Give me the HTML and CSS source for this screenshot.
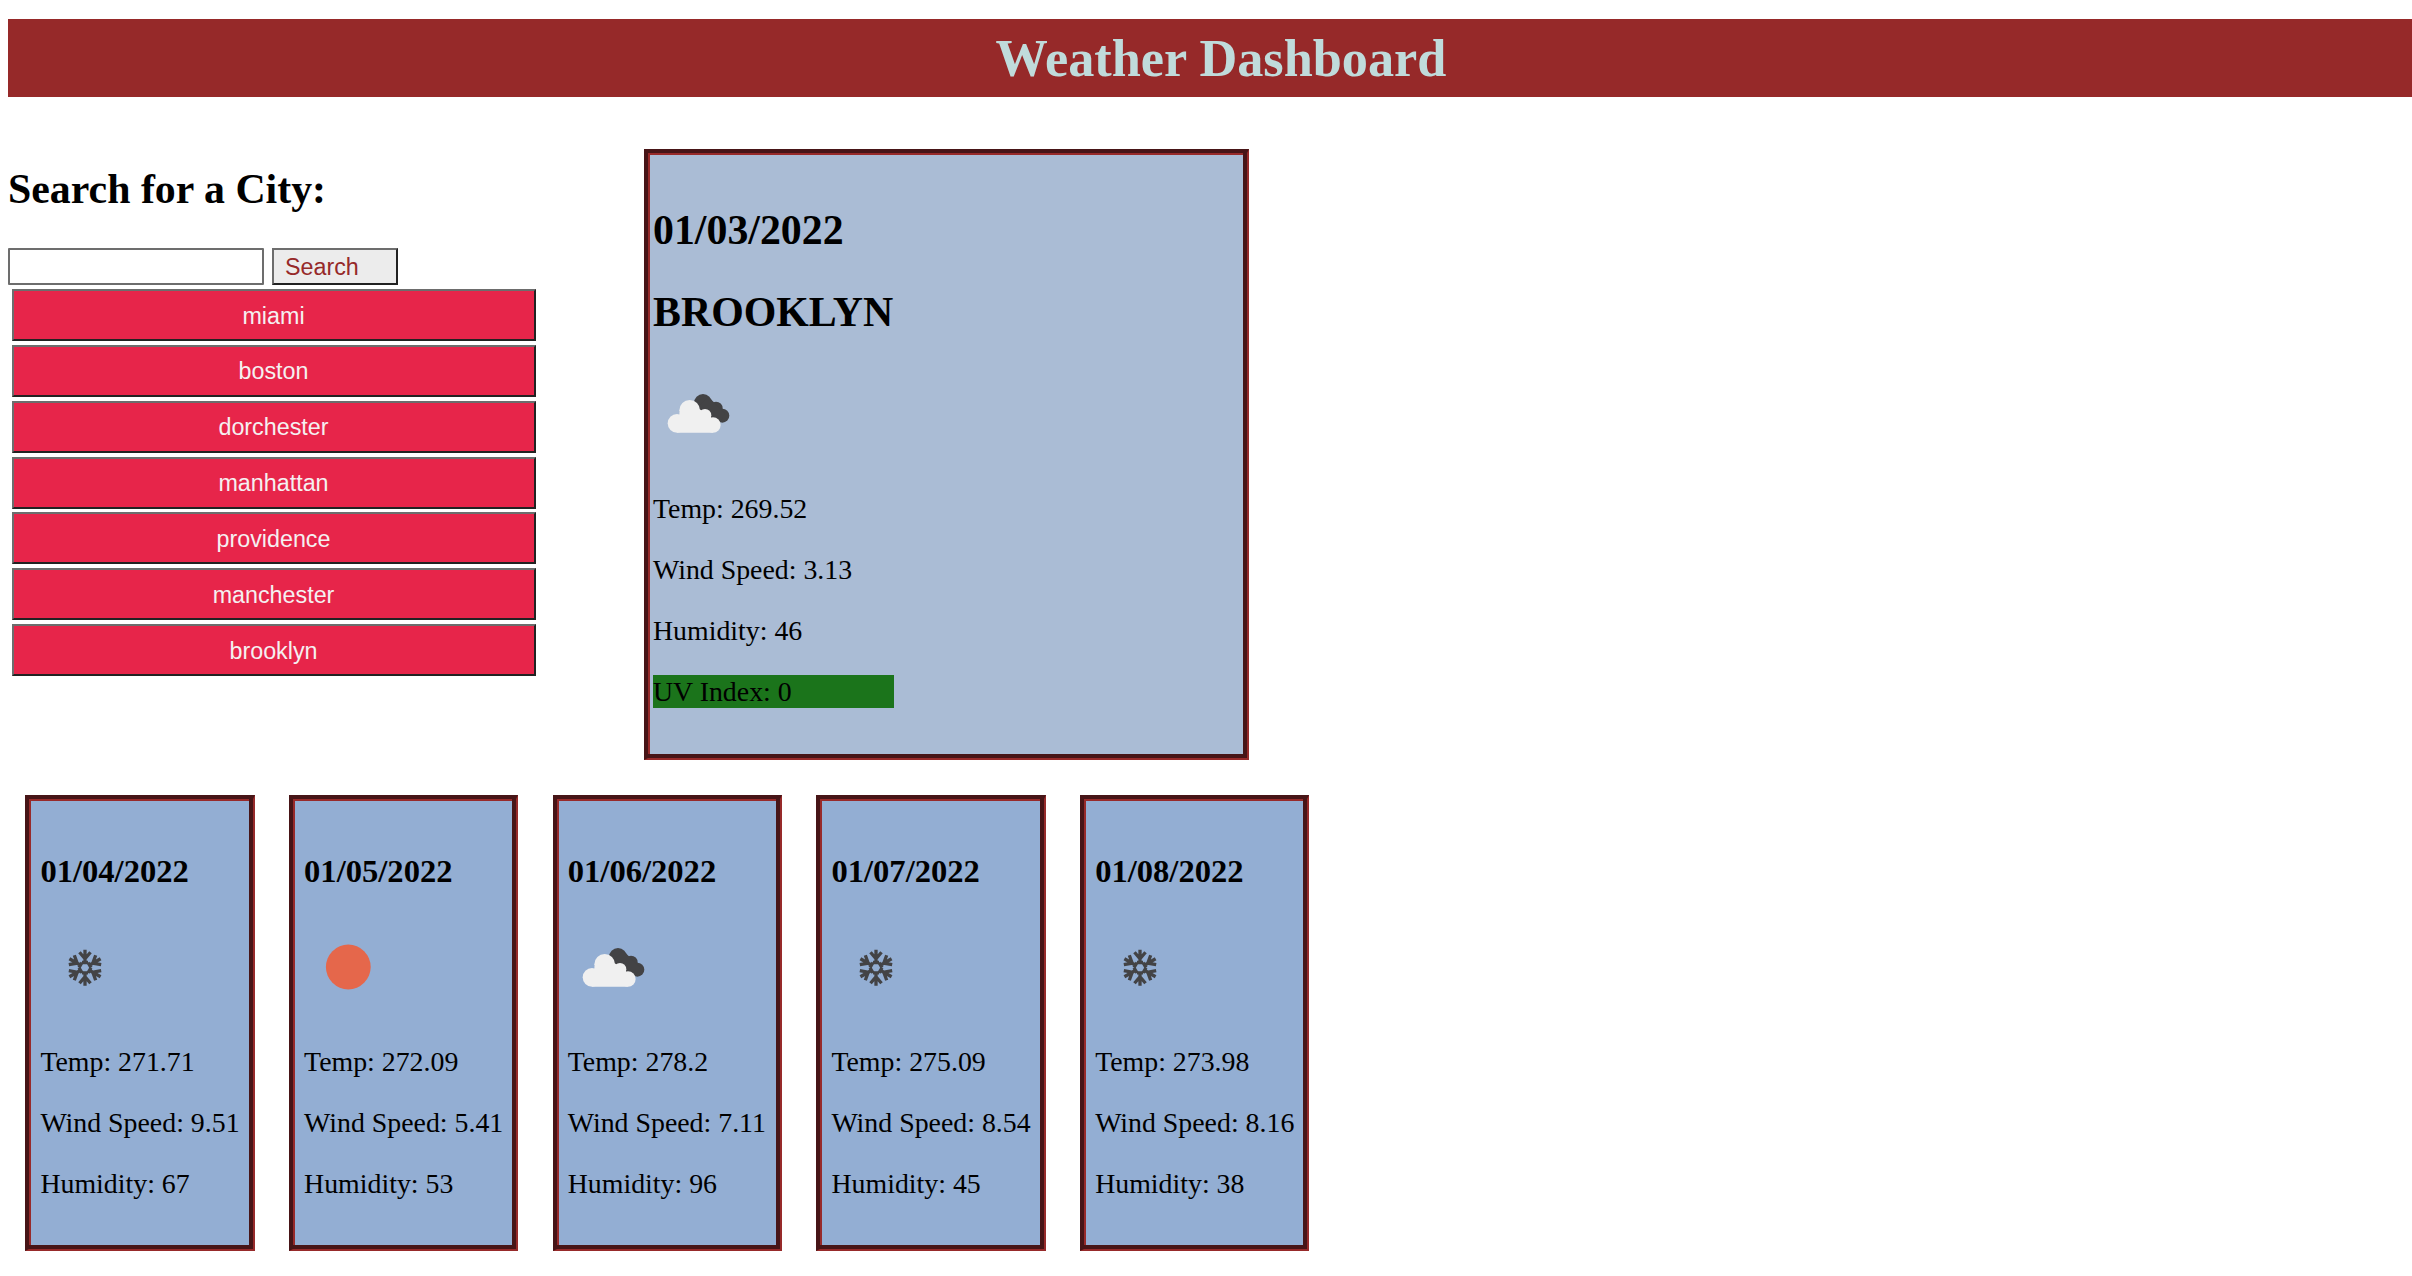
FILE: index.html
```html
<!DOCTYPE html>
<html lang="en">
<head>
<meta charset="utf-8">
<title>Weather Dashboard</title>
<link rel="stylesheet" href="styles.css">
</head>
<body>
<svg class="sprite" aria-hidden="true">
  <symbol id="clouds" viewBox="0 0 77 77">
    <g transform="translate(2 5) scale(.3333)">
      <g fill="#434345">
        <circle cx="144" cy="69" r="27"/><circle cx="183" cy="85" r="20"/><circle cx="202" cy="107" r="21"/>
        <path d="M125 85L160 50L210 100L195 128L160 120Z"/>
      </g>
      <g fill="#f0f0f0">
        <circle cx="66" cy="130" r="28"/><circle cx="104" cy="91" r="31"/><circle cx="150" cy="106" r="19"/><circle cx="174" cy="135" r="23"/>
        <path d="M66 158L74 95L134 88L168 110L174 158Z"/>
      </g>
    </g>
  </symbol>
  <symbol id="snow" viewBox="0 0 77 77">
    <g stroke="#434345" stroke-width="3.300" fill="none" transform="translate(45 38.700)">
      <path id="arm" d="M0 -5V-18M-5.500 -15.500L0 -9L5.500 -15.500M-3 -5.200H3"/>
      <use href="#arm" transform="rotate(60)"/>
      <use href="#arm" transform="rotate(120)"/>
      <use href="#arm" transform="rotate(180)"/>
      <use href="#arm" transform="rotate(240)"/>
      <use href="#arm" transform="rotate(300)"/>
    </g>
  </symbol>
  <symbol id="sun" viewBox="0 0 77 77"><circle cx="44.300" cy="38" r="22.400" fill="#e5674b"/></symbol>
</svg>
<h1 class="title">Weather Dashboard</h1>
<main class="top">
  <section class="search">
    <h2 class="search-title">Search for a City:</h2>
    <form class="search-form">
      <input class="search-input" type="text" aria-label="City">
      <button class="search-button" type="button">Search</button>
    </form>
    <div class="history">
      <button class="city">miami</button>
      <button class="city">boston</button>
      <button class="city">dorchester</button>
      <button class="city">manhattan</button>
      <button class="city">providence</button>
      <button class="city">manchester</button>
      <button class="city">brooklyn</button>
    </div>
  </section>
  <section class="card current">
    <div class="current-body">
      <h2 class="heading">01/03/2022</h2>
      <h2 class="heading">BROOKLYN</h2>
      <svg class="icon"><use href="#clouds"/></svg>
      <p>Temp: 269.52</p>
      <p>Wind Speed: 3.13</p>
      <p>Humidity: 46</p>
      <p class="uv">UV Index: 0</p>
    </div>
  </section>
</main>
<section class="forecast">
  <article class="card day"><h3>01/04/2022</h3><svg class="icon"><use href="#snow"/></svg><p>Temp: 271.71</p><p>Wind Speed: 9.51</p><p>Humidity: 67</p></article>
  <article class="card day"><h3>01/05/2022</h3><svg class="icon"><use href="#sun"/></svg><p>Temp: 272.09</p><p>Wind Speed: 5.41</p><p>Humidity: 53</p></article>
  <article class="card day"><h3>01/06/2022</h3><svg class="icon"><use href="#clouds"/></svg><p>Temp: 278.2</p><p>Wind Speed: 7.11</p><p>Humidity: 96</p></article>
  <article class="card day"><h3>01/07/2022</h3><svg class="icon"><use href="#snow"/></svg><p>Temp: 275.09</p><p>Wind Speed: 8.54</p><p>Humidity: 45</p></article>
  <article class="card day"><h3>01/08/2022</h3><svg class="icon"><use href="#snow"/></svg><p>Temp: 273.98</p><p>Wind Speed: 8.16</p><p>Humidity: 38</p></article>
</section>
</body>
</html>
```
FILE: styles.css
```css
* { box-sizing: border-box; }
body {
  margin: 0;
  padding: 19px 0 0 8px;
  height: 1276px;
  overflow: hidden;
  background: #fff;
  color: #000;
  font: 27.85px/33px "Liberation Serif", "Times New Roman", serif;
}
h1, h2, h3, p { margin: 0; }
.sprite { display: none; }
.title {
  height: 78px;
  padding-left: 22px;
  background: #962929;
  color: #c0dbdb;
  font-size: 52.3px;
  line-height: 79px;
  text-align: center;
}
.top { display: flex; height: 698px; padding-top: 52px; }
.search { width: 636px; padding-top: 16px; }
.search-title { font-size: 41.85px; line-height: 48px; }
.search-form { display: flex; gap: 8px; margin-top: 35px; }
.search-input {
  width: 256px;
  height: 37px;
  border: 2px solid #6d6d6d;
  border-radius: 1px;
  background: #fff;
}
.search-button {
  width: 126px;
  height: 37px;
  padding: 1px 0 0 11px;
  border: 2px solid;
  border-color: #6d6d6d #222 #222 #6d6d6d;
  background: #ececec;
  color: #962929;
  font: 23.3px "Liberation Sans", Arial, sans-serif;
  text-align: left;
}
.history { display: flex; flex-direction: column; gap: 3.87px; padding: 4px 0 0 4px; }
.city {
  width: 524px;
  height: 52px;
  padding: 2px 1px 0 0;
  border: 2px solid;
  border-color: #6d6d6d #222 #222 #6d6d6d;
  background: #e7254a;
  color: #f5f0f1;
  font: 23.3px "Liberation Sans", Arial, sans-serif;
}
.card {
  border-style: solid;
  border-width: 4px 2px 2px 4px;
  border-color: #471517 #972a2a #972a2a #471517;
  box-shadow: inset -4px -4px #471517, inset 2px 2px #972a2a;
}
.current { width: 605px; height: 611px; padding: 53px 0 0 5px; background: #aabcd5; }
.current-body { width: 241px; }
.heading { margin-bottom: 34px; font-size: 41.85px; line-height: 48px; }
.icon { display: block; width: 77px; height: 77px; }
.current .icon { margin: 39px 0 40px; }
.card p { margin-bottom: 28px; }
.uv { background: #1b741b; }
.forecast { display: flex; gap: 34.5px; padding-left: 17.4px; }
.day { width: 229.2px; height: 456px; padding: 53px 0 0 11px; background: #93aed3; }
.day h3 { font-size: 32.6px; line-height: 38px; }
.day .icon { margin: 39px 0; }
```
